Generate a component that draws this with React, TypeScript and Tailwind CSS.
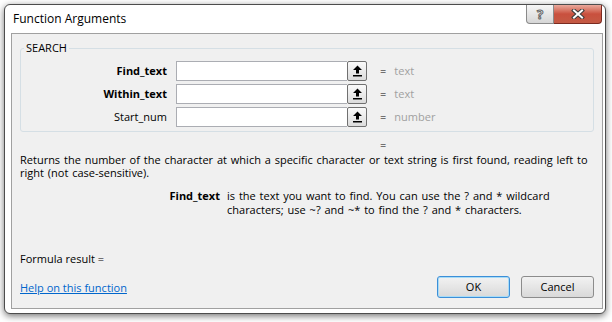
import React from "react";

interface ArgRow {
  name: string;
  kind: string;
  required: boolean;
}

const args: ArgRow[] = [
  { name: "Find_text", kind: "text", required: true },
  { name: "Within_text", kind: "text", required: true },
  { name: "Start_num", kind: "number", required: false },
];

// collapse-dialog button that sits at the right end of each argument box
function RefButton() {
  return (
    <div className="w-[20px] h-[20px] flex items-center justify-center border border-[#707070] rounded-[2px] bg-gradient-to-b from-[#fafafa] to-[#dcdcdc]">
      <svg width="11" height="12" viewBox="0 0 11 12">
        <path d="M5.5 0.5 L10 5 H7 V8.5 H4 V5 H1 Z" fill="#000" />
        <rect x="1" y="10" width="9" height="1.5" fill="#000" />
      </svg>
    </div>
  );
}

function ArgInput({ arg }: { arg: ArgRow }) {
  return (
    <div className="flex items-center h-[20px]">
      <div className={`w-[146px] text-right ${arg.required ? "font-bold" : ""}`}>{arg.name}</div>
      <div className="ml-[9px] w-[191px] h-[20px] flex">
        <div className="flex-1 border border-r-0 border-[#abadb3] bg-white" />
        <RefButton />
      </div>
      <span className="ml-[13px]">=</span>
      <span className="ml-[8px] text-[#a0a0a0]">{arg.kind}</span>
    </div>
  );
}

function CaptionButtons() {
  return (
    <div className="flex mr-[1px]">
      <div className="w-[28px] h-[19px] flex items-center justify-center border border-[#8a8a8a] border-t-0 rounded-bl-[4px] bg-gradient-to-b from-[#f6f6f6] to-[#d6d6d6]">
        <span className="text-[13px] font-bold leading-[15px] text-white [-webkit-text-stroke:1px_#666]">?</span>
      </div>
      <div className="w-[48px] h-[19px] flex items-center justify-center border border-[#7a2a20] border-t-0 border-l-0 rounded-br-[4px] bg-gradient-to-b from-[#e9a99c] via-[#c9503e] to-[#c45a44]">
        <svg width="14" height="10" viewBox="0 0 14 10">
          <path d="M3 1.5 L11 8.5 M11 1.5 L3 8.5" stroke="#3b3b3b" strokeWidth="4" strokeLinecap="square" />
          <path d="M3 1.5 L11 8.5 M11 1.5 L3 8.5" stroke="#fff" strokeWidth="2" strokeLinecap="square" />
        </svg>
      </div>
    </div>
  );
}

export default function App() {
  return (
    <div className="w-[612px] h-[322px] bg-white pl-[4px] pt-[4px] font-['Open_Sans','Liberation_Sans',Arial,sans-serif] text-[11px] text-black">
      <div className="w-[602px] h-[310px] rounded-[6px] border border-[#4d4d4d] bg-white shadow-[0_2px_7px_rgba(0,0,0,0.55)] flex flex-col pl-[6px] pr-[2px]">
        <div className="h-[28px] flex items-start justify-between">
          <span className="mt-[6px] pl-[2px] text-[12px] leading-[16px]">Function Arguments</span>
          <CaptionButtons />
        </div>

        <div className="h-[276px] border border-[#a0a0a0] bg-[#f0f0f0] px-[8px] flex flex-col">
          <fieldset className="mt-[7px] border border-[#d5dfe5] rounded-[3px] px-0 pt-0 pb-[4px]">
            <legend className="ml-[3px] px-[2px] leading-[14px]">SEARCH</legend>
            <div className="mt-[6px] flex flex-col gap-[3px]">
              {args.map((a) => (
                <ArgInput key={a.name} arg={a} />
              ))}
            </div>
          </fieldset>

          <div className="mt-[6px] pl-[360px] leading-[13px]">=</div>
          <p className="mt-[2px] leading-[13px] [word-spacing:1px]">
            Returns the number of the character at which a specific character or text string is first found, reading left to
            right (not case-sensitive).
          </p>

          <div className="mt-[10px] flex leading-[14px]">
            <div className="w-[200px] text-right font-bold">Find_text</div>
            <p className="ml-[7px] w-[350px] [word-spacing:1px]">
              is the text you want to find. You can use the ? and * wildcard characters; use ~? and ~* to find the ? and *
              characters.
            </p>
          </div>

          <div className="mt-[35px] leading-[14px]">Formula result =</div>

          <div className="mt-[10px] flex items-start justify-between">
            <a href="#" className="mt-[5px] leading-[14px] text-[#0066cc] underline">
              Help on this function
            </a>
            <div className="flex gap-[11px]">
              <button className="w-[73px] h-[22px] rounded-[3px] border border-[#3c8fd8] bg-gradient-to-b from-[#f2f2f2] to-[#d9d9d9] shadow-[inset_0_0_0_1px_#a8dcf7]">
                OK
              </button>
              <button className="w-[73px] h-[22px] rounded-[3px] border border-[#8c8c8c] bg-gradient-to-b from-[#f2f2f2] to-[#d9d9d9]">
                Cancel
              </button>
            </div>
          </div>
        </div>
      </div>
    </div>
  );
}
